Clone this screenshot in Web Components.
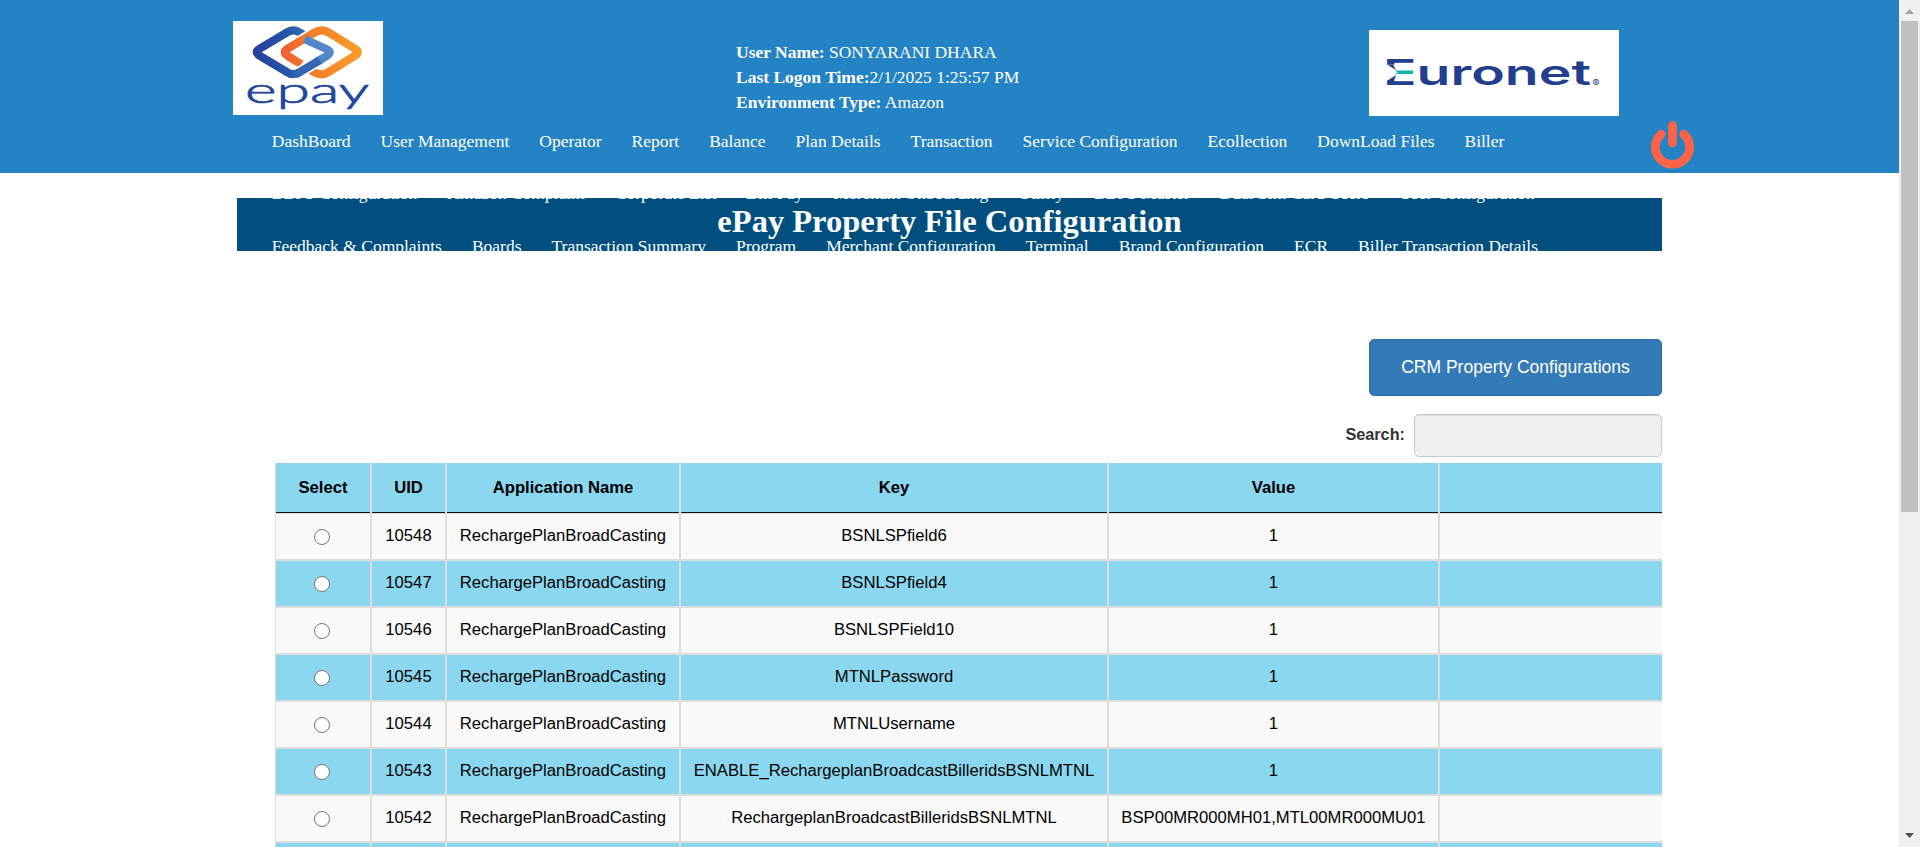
<!DOCTYPE html>
<html lang="en">
<head>
<meta charset="utf-8">
<title>ePay Property File Configuration</title>
<style>
html,body{margin:0;height:100%;overflow:hidden;background:#fff}
</style>
</head>
<body>
<epay-app></epay-app>
<script>
const define = (name, html, init) => customElements.define(name, class extends HTMLElement {
  constructor() {
    super();
    const t = document.createElement('template');
    t.innerHTML = html;
    this.attachShadow({mode: 'open'}).append(t.content.cloneNode(true));
  }
  connectedCallback() { if (init) init(this, this.shadowRoot); }
});

define('epay-logo', `<style>:host{display:block;width:150px;height:94px;background:#fff}svg{display:block}</style>
<svg width="150" height="94" viewBox="0 0 150 94">
<defs>
<linearGradient id="b" x1="0" y1="0" x2="1" y2="0"><stop offset="0" stop-color="#263f9c"/><stop offset=".5" stop-color="#2558a8"/><stop offset="1" stop-color="#5188cc"/></linearGradient>
<linearGradient id="o" x1="0" y1="0" x2="1" y2="0"><stop offset="0" stop-color="#f2602f"/><stop offset=".4" stop-color="#f58026"/><stop offset="1" stop-color="#fb9a2b"/></linearGradient>
</defs>
<g fill="none" stroke-width="7.600" transform="translate(74.800 31.200) scale(1.070 1.070) translate(-75 -31.200)">
<path stroke="url(#b)" d="M71 15 L68 13 Q61.700 8.500 55 13 L30 28 Q24.500 31.200 30 34.500 L55 49.500 Q61.700 54 68 49.500 L88 37.500"/>
<path stroke="#fff" stroke-width="11" d="M63 24 L81 13"/>
<path stroke="url(#o)" d="M69 42.500 L56 34.500 Q51 31.200 56 28 L81 13 Q88 8.500 95 13 L119 28 Q124.500 31.200 119 34.500 L95 49.500 Q88 54 81 50 L76 47"/>
<path stroke="#fff" stroke-width="11" d="M68 49.500 L82 41"/>
<path stroke="#3566b3" d="M63 52.300 L68 49.500 L88 37.500"/>
<path stroke="#5188cc" d="M72 19 L93 28.500 Q98 31.200 93 34.500 L86 38.700"/>
</g>
<text x="12" y="81.500" font-family="Lato" font-weight="300" font-size="35" fill="#23479e" stroke="#23479e" stroke-width=".7" textLength="124" lengthAdjust="spacingAndGlyphs">epay</text>
</svg>`);

define('euronet-logo', `<style>:host{display:block;width:250px;height:86px;background:#fff}svg{display:block}</style>
<svg width="250" height="86" viewBox="0 0 250 86">
<g font-family="Inter" font-weight="600" font-size="35" fill="#233e8f">
<text x="14" y="55" textLength="208" lengthAdjust="spacingAndGlyphs">Euronet</text>
<text x="223.500" y="56.500" font-size="10.500" font-weight="400">®</text></g>
<rect x="16" y="34.500" width="31" height="16" fill="#fff"/>
<path fill="#233e8f" d="M18 34.500 H24 L27 40 Z M18 51 H25 L27 45Z"/>
<path fill="#13b5a8" d="M26 40.500 H44 V44 H26 L29 42.200Z"/>
</svg>`);

define('user-info', `<style>:host{display:block;color:#fff;font:17.5px/25px "Liberation Serif",serif;white-space:nowrap}</style>
<div><b>User Name:</b> SONYARANI DHARA</div><div><b>Last Logon Time:</b>2/1/2025 1:25:57 PM</div><div><b>Environment Type:</b> Amazon</div>`);

define('nav-row', `<style>:host{display:flex;gap:30px;height:52.5px;align-items:center;white-space:nowrap}</style>`, (el, root) => {
  el.getAttribute('items').split('|').forEach(t => { const s = document.createElement('span'); s.textContent = t; root.append(s); });
});

define('main-nav', `<style>:host{display:block;position:relative;z-index:2;color:#fff;font:17.5px/25px "Liberation Serif",serif}</style><slot></slot>`);

define('power-button', `<style>:host{display:block;width:43px;height:48px}svg{display:block}</style>
<svg width="43" height="48" viewBox="0 0 43 48" fill="none" stroke="#ff6347" stroke-width="8.700" stroke-linecap="round"><path d="M10.200 13.200A17.150 17.150 0 1 0 32.800 13.200M21.500 4.400V22"/></svg>`);

define('page-header', `<style>
:host{display:grid;grid-template-rows:115px 58px;height:173px;background:#2483c4}
.top{display:grid;grid-template-columns:233px 503px 633px 250px;align-items:start}
.top epay-logo{grid-column:2;margin-top:21px}
.top user-info{margin-top:40px}
.top euronet-logo{margin-top:30px}
.bottom{display:flex;align-items:flex-start;padding-left:271.800px}
main-nav{width:1379.200px}
power-button{margin-top:6px}
</style>
<div class="top"><epay-logo></epay-logo><user-info></user-info><euronet-logo></euronet-logo></div>
<div class="bottom"><main-nav>
<nav-row items="DashBoard|User Management|Operator|Report|Balance|Plan Details|Transaction|Service Configuration|Ecollection|DownLoad Files|Biller"></nav-row>
<nav-row items="BBPS Configuration|Amazon Complaint|Corporate List|Bill Pay|Merchant Onboarding|Utility|BBPS Master|Dual Sim Card Users|User Configuration"></nav-row>
<nav-row items="Feedback &amp; Complaints|Boards|Transaction Summary|Program|Merchant Configuration|Terminal|Brand Configuration|ECR|Biller Transaction Details"></nav-row>
</main-nav><power-button></power-button></div>`);

define('page-banner', `<style>:host{display:block;height:53px;background:#004f7f;color:#fff;text-align:center;font:bold 32.5px/46px "Liberation Serif",serif}</style><slot></slot>`);

define('crm-button', `<style>:host{display:block}button{display:block;box-sizing:border-box;width:293px;height:57px;padding:0;background:#337ab7;border:1px solid #2e6da4;border-radius:5px;color:#fff;font:17.5px/25px "Liberation Sans",sans-serif}</style><button><slot></slot></button>`);

define('search-field', `<style>:host{display:flex;align-items:center;gap:9px;color:#333;font:bold 16.25px/23px "Liberation Sans",sans-serif}
label{padding-bottom:2px}
input{box-sizing:border-box;width:248px;height:43px;margin:0;background:#f0f0f0;border:1px solid #c8c8c8;border-radius:5px;box-shadow:inset 0 1px 1px rgba(0,0,0,.075);outline:0}</style><label>Search:</label><input type="text">`);

define('property-table', `<style>
:host{display:block;height:384px;overflow:hidden;border-left:1px solid #ddd;color:#000;font:16.65px/23px "Liberation Sans",sans-serif}
.r{display:grid;grid-template-columns:96px 75px 234px 428px 331px 1fr;height:47px}
.r>div{box-sizing:border-box;display:flex;align-items:center;justify-content:center;background:#f9f9f9;border-right:2px solid #ddd;border-bottom:2px solid #ddd;white-space:nowrap;padding-bottom:3px}
.r>div:last-child{border-right:0}
.r.b>div{background:#8ad7ef}
.r.h{height:51px}
.r.h>div{font-weight:bold;border-bottom:0;padding:0 0 3px;background:linear-gradient(#111,#111) 0 49px/100% 1px no-repeat,linear-gradient(#ddd,#ddd) 0 50px/100% 1px no-repeat,#8ad7ef}
i{box-sizing:border-box;width:16px;height:16px;border:1px solid #767676;border-radius:50%;background:#fff;margin:3px 2px 0 0}
</style>`, (el, root) => {
  const R = 'RechargePlanBroadCasting';
  const rows = [['10548','BSNLSPfield6','1'],['10547','BSNLSPfield4','1'],['10546','BSNLSPField10','1'],['10545','MTNLPassword','1'],['10544','MTNLUsername','1'],['10543','ENABLE_RechargeplanBroadcastBilleridsBSNLMTNL','1'],['10542','RechargeplanBroadcastBilleridsBSNLMTNL','BSP00MR000MH01,MTL00MR000MU01']];
  const add = (cells, cls) => { const r = document.createElement('div'); r.className = 'r ' + cls; r.innerHTML = cells.map(c => `<div>${c}</div>`).join(''); root.append(r); };
  add(['Select','UID','Application Name','Key','Value',''], 'h');
  rows.forEach(([u,k,v], n) => add(['<i></i>',u,R,k,v,''], n % 2 ? 'b' : ''));
  add(['','','','','',''], 'b');
});

define('page-scrollbar', `<style>:host{display:flex;flex-direction:column;align-items:center;background:#f0f0f0;width:21px}
svg{display:block;height:21px;flex:none}.t{width:17px;height:491px;background:#c1c1c1}.s{flex:1}</style>
<svg width="21" viewBox="0 0 21 21"><path d="M6 14L10.500 9L15 14Z" fill="#a3a3a3"/></svg><div class="t"></div><div class="s"></div><svg width="21" viewBox="0 0 21 21"><path d="M6 7L10.500 12L15 7Z" fill="#505050"/></svg>`);

define('epay-app', `<style>
:host{display:grid;grid-template-columns:1899px 21px;height:847px;overflow:hidden}
.body{display:flex;flex-direction:column;width:1425px;margin-left:237px}
page-banner{margin-top:25px}
crm-button{margin:88px 0 18px;align-self:flex-end}
search-field{align-self:flex-end;margin-bottom:6px}
property-table{margin-left:38px}
</style>
<div><page-header></page-header>
<div class="body"><page-banner>ePay Property File Configuration</page-banner>
<crm-button>CRM Property Configurations</crm-button><search-field></search-field><property-table></property-table></div></div>
<page-scrollbar></page-scrollbar>`);
</script>
</body>
</html>
